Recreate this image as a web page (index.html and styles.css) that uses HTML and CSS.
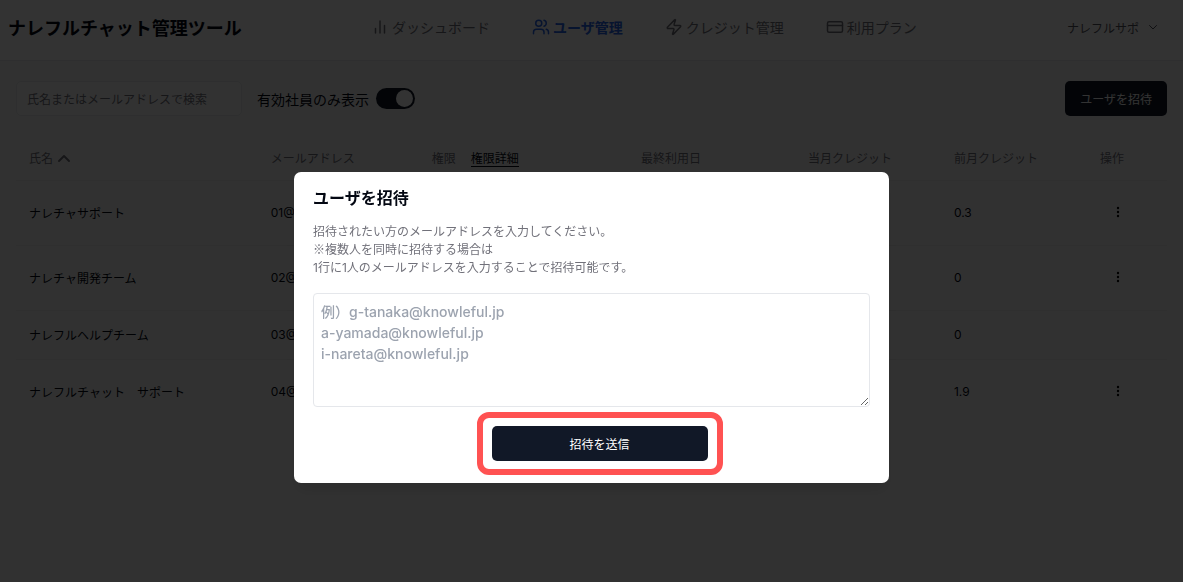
FILE: index.html
```
<!DOCTYPE html>
<html lang="ja">
<head>
<meta charset="utf-8">
<meta name="viewport" content="width=device-width, initial-scale=1">
<title>ナレフルチャット管理ツール</title>
<link rel="stylesheet" href="styles.css">
</head>
<body>
<header class="header">
  <h1 class="brand">ナレフルチャット管理ツール</h1>
  <nav class="nav">
    <a class="nav-link" href="#"><svg class="icon" viewBox="0 0 24 24"><path d="M18 20V10M12 20V4M6 20v-6"/></svg>ダッシュボード</a>
    <a class="nav-link active" href="#"><svg class="icon" viewBox="0 0 24 24"><path d="M16 21v-2a4 4 0 0 0-4-4H6a4 4 0 0 0-4 4v2M22 21v-2a4 4 0 0 0-3-3.87M16 3.13a4 4 0 0 1 0 7.75"/><circle cx="9" cy="7" r="4"/></svg>ユーザ管理</a>
    <a class="nav-link" href="#"><svg class="icon" viewBox="0 0 24 24"><path d="M4 14a1 1 0 0 1-.78-1.63l9.9-10.2a.5.5 0 0 1 .86.46l-1.92 6.02A1 1 0 0 0 13 10h7a1 1 0 0 1 .78 1.63l-9.9 10.2a.5.5 0 0 1-.86-.46l1.92-6.02A1 1 0 0 0 11 14z"/></svg>クレジット管理</a>
    <a class="nav-link" href="#"><svg class="icon" viewBox="0 0 24 24"><rect x="2" y="5" width="20" height="14" rx="2"/><path d="M2 10h20"/></svg>利用プラン</a>
  </nav>
  <button class="account" type="button">ナレフルサポ<svg class="chevron" viewBox="0 0 24 24"><path d="m5 9 7 7 7-7"/></svg></button>
</header>

<main class="content">
  <div class="toolbar">
    <input class="search" type="search" aria-label="検索" placeholder="氏名またはメールアドレスで検索">
    <label class="toggle">有効社員のみ表示<input class="switch" type="checkbox" role="switch" checked></label>
    <button class="button invite" type="button">ユーザを招待</button>
  </div>
  <table class="users">
    <colgroup><col class="c-name"><col class="c-mail"><col class="c-role"><col class="c-detail"><col class="c-date"><col class="c-credit"><col class="c-credit"><col class="c-action"></colgroup>
    <thead>
      <tr>
        <th>氏名<svg class="sort" viewBox="0 0 14 10"><path d="m2 8 5-5 5 5"/></svg></th>
        <th>メールアドレス</th><th>権限</th><th><a class="detail" href="#">権限詳細</a></th>
        <th>最終利用日</th><th>当月クレジット</th><th>前月クレジット</th><th>操作</th>
      </tr>
    </thead>
    <tbody>
      <tr><td>ナレチャサポート</td><td>01@</td><td></td><td></td><td></td><td></td><td>0.3</td><td><button class="more" type="button" aria-label="操作"><svg viewBox="0 0 4 12"><circle cx="2" cy="2" r="1.2"/><circle cx="2" cy="6" r="1.2"/><circle cx="2" cy="10" r="1.2"/></svg></button></td></tr>
      <tr><td>ナレチャ開発チーム</td><td>02@</td><td></td><td></td><td></td><td></td><td>0</td><td><button class="more" type="button" aria-label="操作"><svg viewBox="0 0 4 12"><circle cx="2" cy="2" r="1.2"/><circle cx="2" cy="6" r="1.2"/><circle cx="2" cy="10" r="1.2"/></svg></button></td></tr>
      <tr><td>ナレフルヘルプチーム</td><td>03@</td><td></td><td></td><td></td><td></td><td>0</td><td></td></tr>
      <tr><td>ナレフルチャット　サポート</td><td>04@</td><td></td><td></td><td></td><td></td><td>1.9</td><td><button class="more" type="button" aria-label="操作"><svg viewBox="0 0 4 12"><circle cx="2" cy="2" r="1.2"/><circle cx="2" cy="6" r="1.2"/><circle cx="2" cy="10" r="1.2"/></svg></button></td></tr>
    </tbody>
  </table>
</main>

<div class="overlay">
  <form class="modal" role="dialog" aria-modal="true" aria-labelledby="modal-title">
    <h2 class="modal-title" id="modal-title">ユーザを招待</h2>
    <p class="modal-text" id="modal-text">招待されたい方のメールアドレスを入力してください。<br><span class="mark">※</span>複数人を同時に招待する場合は<br>1行に1人のメールアドレスを入力することで招待可能です。</p>
    <textarea class="emails" aria-labelledby="modal-text" placeholder="例）g-tanaka@knowleful.jp&#10;a-yamada@knowleful.jp&#10;i-nareta@knowleful.jp"></textarea>
    <div class="actions"><button class="button send" type="button">招待を送信</button></div>
  </form>
</div>
</body>
</html>
```
FILE: styles.css
```
* { box-sizing: border-box; }

body {
  margin: 0;
  min-height: 100vh;
  background: #f6f6f6;
  color: #030712;
  font-family: Inter, "Noto Sans CJK JP", sans-serif;
  font-size: 12px;
}

button, input, textarea { font: inherit; }
h1, h2, p { margin: 0; }
a { color: inherit; text-decoration: none; }

.header {
  display: flex;
  justify-content: space-between;
  align-items: center;
  height: 61px;
  padding: 0 24px 6px 8px;
  background: #fff;
  border-bottom: 1px solid #e5e7eb;
}
.brand { font-size: 18px; font-weight: 700; white-space: nowrap; }
.nav { display: flex; gap: 42px; margin-right: 21px; }
.nav-link {
  display: flex;
  align-items: center;
  gap: 3px;
  color: #71717a;
  font-size: 14px;
  white-space: nowrap;
}
.nav-link.active { color: #2563eb; font-weight: 700; }
.icon, .chevron, .sort {
  fill: none;
  stroke: currentColor;
  stroke-width: 2;
  stroke-linecap: round;
  stroke-linejoin: round;
}
.icon { width: 18px; height: 18px; }
.account {
  display: flex;
  align-items: center;
  gap: 8px;
  padding: 0;
  border: 0;
  background: none;
  color: #52525b;
}
.chevron { width: 12px; height: 12px; }

.content { padding: 20px 16px; }
.toolbar { display: flex; align-items: center; gap: 15px; }
.search {
  width: 226px;
  height: 35px;
  padding: 1px 10px 0;
  border: 1px solid #e5e7eb;
  border-radius: 5px;
  background: #fafafa;
}
.search::placeholder { color: #71717a; }
.toggle { display: flex; align-items: center; gap: 7px; font-size: 14px; }
.switch {
  appearance: none;
  display: flex;
  justify-content: flex-end;
  width: 39px;
  height: 21px;
  margin: 0;
  padding: 2px;
  border-radius: 11px;
  background: #111827;
}
.switch::before {
  content: "";
  width: 17px;
  height: 17px;
  border-radius: 50%;
  background: #fff;
}
.button {
  height: 35px;
  border: 0;
  border-radius: 5px;
  background: #111827;
  color: #fff;
  font-weight: 500;
}
.invite { margin-left: auto; padding: 0 15px; font-weight: 400; }

.users {
  width: 100%;
  margin-top: 21px;
  border-collapse: collapse;
  table-layout: fixed;
}
.c-name { width: 21%; }
.c-mail { width: 14%; }
.c-role { width: 39px; }
.c-detail { width: 170px; }
.c-date { width: 167px; }
.c-credit { width: 146px; }
.c-action { width: 80px; }
.users th, .users td {
  height: 49px;
  padding: 0 0 1px 13px;
  text-align: left;
  font-weight: 400;
  white-space: nowrap;
}
.users th { height: 43px; color: #71717a; }
.users tr { border-bottom: 1px solid #ebebeb; }
.users tbody tr:last-child { border-bottom: 0; }
.detail { color: #030712; border-bottom: 1px solid #030712; }
.sort { width: 14px; height: 10px; margin-left: 4px; }
.more {
  display: grid;
  place-items: center;
  width: 36px;
  height: 63px;
  padding: 0;
  border: 0;
  background: none;
}
.more svg { width: 4px; height: 12px; }

.overlay {
  position: fixed;
  inset: 0;
  display: flex;
  justify-content: center;
  align-items: flex-start;
  padding: 172px 16px 16px;
  background: rgba(0, 0, 0, 0.8);
}
.modal {
  display: flex;
  flex-direction: column;
  width: 100%;
  max-width: 595px;
  padding: 14px 19px 22px;
  border-radius: 7px;
  background: #fff;
  box-shadow: 0 10px 15px rgba(0, 0, 0, 0.1);
}
.modal-title { font-size: 16px; line-height: 24px; font-weight: 700; }
.modal-text { margin-top: 13px; color: #71717a; line-height: 18px; }
.mark { font-family: "Noto Sans CJK JP", sans-serif; line-height: 1; }
.emails {
  height: 114px;
  margin-top: 16px;
  padding: 7px;
  border: 1px solid #e5e7eb;
  border-radius: 4px;
  font-size: 14px;
  font-weight: 500;
  line-height: 21px;
  resize: vertical;
}
.emails::placeholder { color: #9ca3af; }
.actions { display: flex; justify-content: center; margin-top: 19px; padding-left: 16px; }
.send { position: relative; width: 216px; font-weight: 400; }
.send::after {
  content: "";
  position: absolute;
  inset: -14px -15px;
  border: 6px solid #ff5252;
  border-radius: 12px;
}
```
